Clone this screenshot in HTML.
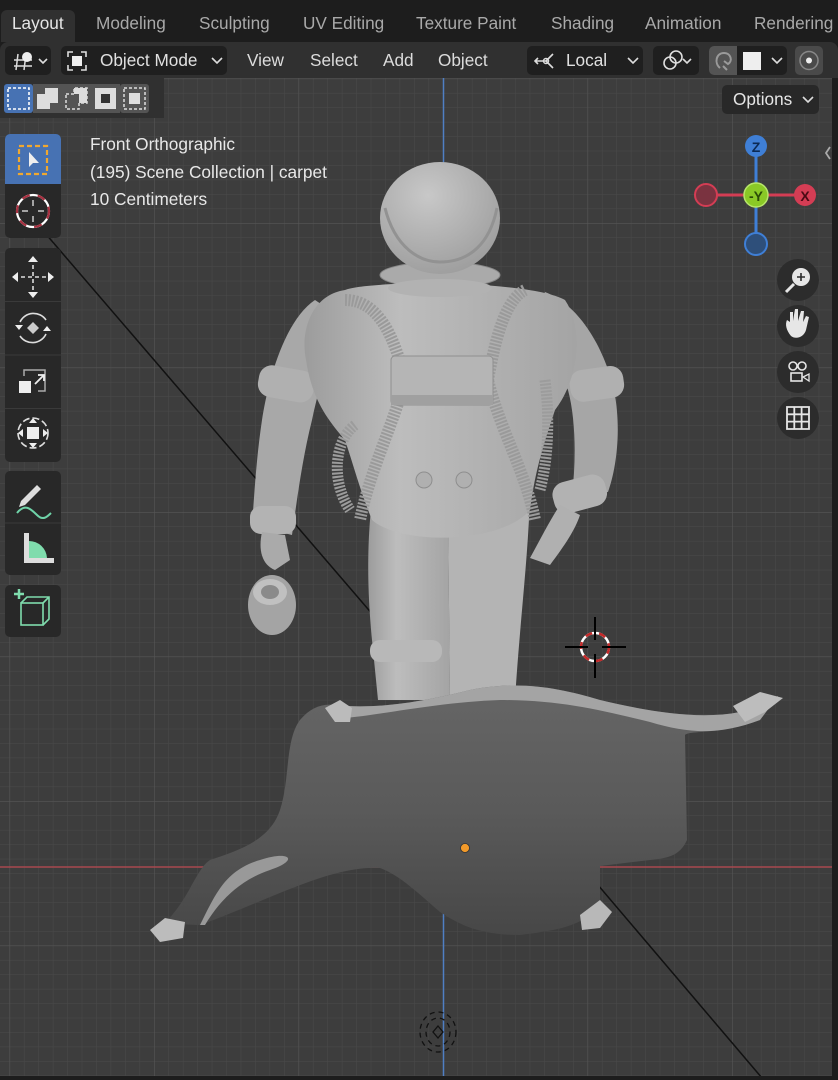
<!DOCTYPE html>
<html><head><meta charset="utf-8"><style>
*{margin:0;padding:0;box-sizing:border-box}
body{width:838px;height:1080px;background:#1d1d1d;overflow:hidden;position:relative;font-family:"Liberation Sans",sans-serif;}
.tabs{position:absolute;left:0;top:0;width:838px;height:42px;background:#1d1d1d;}
.tab{position:absolute;top:10px;height:32px;line-height:26px;font-size:17.2px;color:#a9a9a9;}
.tab.active{background:#303030;color:#e6e6e6;border-radius:6px 6px 0 0;padding:0 11px;left:1px}
.hdr{position:absolute;left:0;top:42px;width:838px;height:36px;background:#303030;border-radius:8px 8px 0 0}
.btn{position:absolute;top:4px;height:29px;background:#1f1f1f;border-radius:5px;color:#e0e0e0;font-size:17.2px;line-height:29px}
.mi{position:absolute;top:4px;height:29px;line-height:29px;color:#dcdcdc;font-size:17.2px}
.txt{position:absolute;color:#e8e8e8;font-size:17.3px;left:90px}
.tb{position:absolute;left:5px;width:56px;background:#282828;border-radius:5px}
</style></head><body>
<div class="tabs">
<div class="tab active">Layout</div>
<div class="tab" style="left:96px">Modeling</div>
<div class="tab" style="left:199px">Sculpting</div>
<div class="tab" style="left:303px">UV Editing</div>
<div class="tab" style="left:416px">Texture Paint</div>
<div class="tab" style="left:551px">Shading</div>
<div class="tab" style="left:645px">Animation</div>
<div class="tab" style="left:754px">Rendering</div>
</div>

<svg style="position:absolute;left:0;top:78px" width="838" height="1002">
<defs>
<pattern id="g" width="14.45" height="14.45" patternUnits="userSpaceOnUse" x="9.5" y="0.5">
<path d="M0 0H14.45M0 0V14.45" stroke="#4a4a4a" stroke-width="1" fill="none"/>
</pattern>
<pattern id="G" width="144.5" height="144.5" patternUnits="userSpaceOnUse" x="9.5" y="0.5">
<path d="M0 0H144.5M0 0V144.5" stroke="#565656" stroke-width="1.2" fill="none"/>
</pattern>
<linearGradient id="cg" x1="0" y1="0" x2="0" y2="1"><stop offset="0" stop-color="#666"/><stop offset="0.5" stop-color="#5a5a5a"/><stop offset="1" stop-color="#474747"/></linearGradient>
<radialGradient id="hg" cx="0.4" cy="0.3" r="0.8"><stop offset="0" stop-color="#c8c8c8"/><stop offset="1" stop-color="#9a9a9a"/></radialGradient>
<linearGradient id="bg" x1="0" y1="0" x2="1" y2="0"><stop offset="0" stop-color="#9c9c9c"/><stop offset="0.35" stop-color="#bdbdbd"/><stop offset="1" stop-color="#a4a4a4"/></linearGradient>
</defs>
<rect width="832" height="998" fill="#3d3d3d"/>
<rect width="832" height="998" fill="url(#g)"/>
<rect width="832" height="998" fill="url(#G)"/>
<rect x="0" y="0" width="164" height="40" fill="#303030"/>
<line x1="443.5" y1="0" x2="443.5" y2="998" stroke="#4f7fc4" stroke-width="1.5"/>
<line x1="0" y1="789" x2="832" y2="789" stroke="#a8484f" stroke-width="1.5"/>
<line x1="45" y1="155" x2="380" y2="545" stroke="#111" stroke-width="1.5"/>
<line x1="575" y1="780" x2="762" y2="1000" stroke="#111" stroke-width="1.5"/>

<g transform="translate(0,-78)">
<!-- left arm -->
<path d="M315 300 C285 320 268 380 262 420 C256 460 254 500 252 525 L292 535 C297 500 302 460 312 420 C320 380 335 340 345 320Z" fill="#a8a8a8"/>
<rect x="258" y="368" width="56" height="32" rx="13" fill="#b0b0b0" transform="rotate(10 287 385)"/>
<rect x="250" y="506" width="46" height="28" rx="11" fill="#b3b3b3"/>
<path d="M262 532 C258 550 262 565 275 570 L290 560 L285 535Z" fill="#aaa"/>
<ellipse cx="272" cy="605" rx="24" ry="30" fill="#a4a4a4"/>
<ellipse cx="270" cy="592" rx="17" ry="13" fill="#c0c0c0"/>
<ellipse cx="270" cy="592" rx="9" ry="7" fill="#8a8a8a"/>
<!-- right arm -->
<path d="M545 292 C580 305 605 350 614 390 C622 430 616 470 608 492 L572 497 C576 460 576 420 568 390 C558 360 543 330 533 320Z" fill="#a6a6a6"/>
<rect x="570" y="368" width="54" height="32" rx="13" fill="#b0b0b0" transform="rotate(-8 596 385)"/>
<rect x="553" y="478" width="54" height="32" rx="13" fill="#b2b2b2" transform="rotate(-15 580 495)"/>
<path d="M560 505 C550 520 540 540 530 558 L550 565 C565 545 575 530 580 515Z" fill="#b0b0b0"/>
<!-- legs -->
<path d="M372 500 L448 510 L450 700 L378 700 L372 640 C368 600 366 550 372 500Z" fill="url(#bg)"/>
<path d="M448 510 L530 495 C528 560 520 620 515 700 L450 700Z" fill="#b4b4b4"/>
<rect x="370" y="640" width="72" height="22" rx="10" fill="#b8b8b8"/>
<!-- torso -->
<path d="M345 290 C312 295 300 330 306 360 C312 400 328 420 345 440 C355 470 360 490 372 520 C400 545 500 545 530 510 C535 470 545 440 555 410 C578 380 585 330 565 300 C530 280 370 280 345 290Z" fill="url(#bg)"/>
<path d="M345 300 C380 300 395 340 405 380 C395 420 370 470 360 520" stroke="#9a9a9a" stroke-width="12" fill="none" stroke-dasharray="2 1.5"/>
<path d="M525 290 C505 300 495 340 488 380 C500 430 525 470 535 520" stroke="#9a9a9a" stroke-width="12" fill="none" stroke-dasharray="2 1.5"/>
<path d="M355 425 C335 440 330 480 350 510" stroke="#9c9c9c" stroke-width="11" fill="none" stroke-dasharray="2 1.5"/>
<path d="M545 380 C550 420 548 460 540 490" stroke="#9c9c9c" stroke-width="11" fill="none" stroke-dasharray="2 1.5"/>
<rect x="391" y="356" width="102" height="49" rx="4" fill="#b5b5b5" stroke="#909090"/>
<rect x="391" y="395" width="102" height="10" fill="#a0a0a0"/>
<circle cx="424" cy="480" r="8" fill="#b0b0b0" stroke="#8e8e8e"/>
<circle cx="464" cy="480" r="8" fill="#b0b0b0" stroke="#8e8e8e"/>
<ellipse cx="440" cy="275" rx="60" ry="13" fill="#aaa" stroke="#888"/>
<ellipse cx="440" cy="288" rx="52" ry="9" fill="#b2b2b2"/>
<ellipse cx="440" cy="218" rx="60" ry="56" fill="url(#hg)"/>
<path d="M385 208 C395 248 420 262 440 262 C470 262 490 243 497 208" stroke="#929292" stroke-width="3" fill="none"/>
<!-- carpet -->
<path d="M335 705 C380 710 430 700 470 690 C520 680 560 688 600 700 C650 712 700 720 740 712 L778 696 L760 720 C720 735 690 730 685 735 L687 840 C680 855 670 858 650 860 L600 866 L600 900 C590 925 560 930 520 935 C480 935 460 925 440 912 C420 895 400 875 380 868 C330 865 270 900 200 925 C185 925 175 922 160 928 C190 900 195 870 210 860 C240 850 270 840 280 810 C290 780 285 740 300 720 C310 708 322 703 335 705Z" fill="url(#cg)"/>
<path d="M335 705 C380 710 430 700 470 690 C520 680 560 688 600 700 C650 712 700 720 740 712 L778 696 L760 720 C720 735 690 734 650 722 C600 710 560 700 500 700 C440 702 380 715 345 718Z" fill="#a4a4a4"/>
<path d="M200 925 C215 895 225 870 260 860 C290 850 300 860 270 870 C240 880 220 900 205 925Z" fill="#999"/>
<path d="M150 930 L165 918 L185 922 L183 938 L160 942Z" fill="#bcbcbc"/>
<path d="M325 708 L340 700 L352 708 L350 722 L335 722Z" fill="#bbb"/>
<path d="M733 706 L760 692 L783 698 L765 712 L745 722Z" fill="#bdbdbd"/>
<path d="M580 915 L600 900 L612 912 L600 928 L582 930Z" fill="#b8b8b8"/>
<circle cx="465" cy="848" r="4.5" fill="#f29a2a" stroke="#333" stroke-width="0.8"/>
<circle cx="595" cy="647" r="14" fill="none" stroke="#fff" stroke-width="2.5"/>
<circle cx="595" cy="647" r="14" fill="none" stroke="#c42a2a" stroke-width="2.5" stroke-dasharray="7 7"/>
<path d="M565 647H588M602 647H626M595 617V640M595 654V678" stroke="#000" stroke-width="2"/>
<ellipse cx="438" cy="1032" rx="18" ry="20" fill="none" stroke="#111" stroke-width="1.3" stroke-dasharray="5 4"/>
<ellipse cx="438" cy="1032" rx="12" ry="14" fill="none" stroke="#111" stroke-width="1.3" stroke-dasharray="5 4"/>
<path d="M438 1026 L443 1032 L438 1038 L433 1032Z" fill="none" stroke="#111" stroke-width="1.3"/>
<line x1="756" y1="148" x2="756" y2="244" stroke="#3f7fd6" stroke-width="3"/>
<line x1="706" y1="195" x2="805" y2="195" stroke="#d43d54" stroke-width="3"/>
<circle cx="756" cy="146" r="11" fill="#3f7fd6"/>
<text x="756" y="152" font-size="14" font-weight="bold" text-anchor="middle" fill="#0c2a55" font-family="Liberation Sans">Z</text>
<circle cx="706" cy="195" r="11" fill="#7a3340" stroke="#d43d54" stroke-width="2"/>
<circle cx="756" cy="244" r="11" fill="#2e4f7a" stroke="#3f7fd6" stroke-width="2"/>
<circle cx="805" cy="195" r="11" fill="#d43d54"/>
<text x="805" y="201" font-size="14" font-weight="bold" text-anchor="middle" fill="#4a0a14" font-family="Liberation Sans">X</text>
<circle cx="756" cy="195" r="12" fill="#8ac926" stroke="#b7e66a" stroke-width="1.5"/>
<text x="756" y="201" font-size="14" font-weight="bold" text-anchor="middle" fill="#2a4a08" font-family="Liberation Sans">-Y</text>
<circle cx="798" cy="280" r="21" fill="#2c2c2c"/>
<circle cx="801" cy="277" r="9" fill="#e6e6e6"/><path d="M797 277h8M801 273v8" stroke="#2c2c2c" stroke-width="1.6"/><path d="M794 284 L786 292" stroke="#e6e6e6" stroke-width="3"/>
<circle cx="798" cy="326" r="21" fill="#2c2c2c"/>
<path d="M791 336 C786 330 785 324 787 320 L790 322 L790 312 L793 312 L793 321 L795 309 L798 309 L798 321 L801 311 L804 311 L803 322 L806 316 L809 317 L806 330 C804 337 796 340 791 336Z" fill="#e6e6e6"/>
<circle cx="798" cy="372" r="21" fill="#2c2c2c"/>
<circle cx="793" cy="366" r="4" fill="none" stroke="#e6e6e6" stroke-width="1.6"/><circle cx="802" cy="366" r="4" fill="none" stroke="#e6e6e6" stroke-width="1.6"/>
<rect x="791" y="373" width="11" height="8" fill="none" stroke="#e6e6e6" stroke-width="1.6"/><path d="M803 377 L809 374 V381Z" fill="none" stroke="#e6e6e6" stroke-width="1.3"/>
<circle cx="798" cy="418" r="21" fill="#2c2c2c"/>
<path d="M787 407h22v22h-22zM787 414.3h22M787 421.6h22M794.3 407v22M801.6 407v22" stroke="#e6e6e6" stroke-width="1.8" fill="none"/>
<path d="M830 147 L826 153 L830 159" stroke="#aaa" stroke-width="1.8" fill="none"/>
</g>
<rect x="832" y="0" width="6" height="1002" fill="#1d1d1d"/>
<rect x="0" y="998" width="838" height="4" fill="#1d1d1d"/>
</svg>

<div class="hdr">
<div class="btn" style="left:5px;width:46px"><svg width="46" height="29"><path d="M9 20h18M9 14h18M13 8l-2 16M21 8l-2 16" stroke="#ddd" stroke-width="1.5"/><circle cx="22" cy="11" r="5" fill="#eee"/><path d="M34 13l4 4 4-4" stroke="#ddd" stroke-width="1.6" fill="none"/></svg></div>
<div class="btn" style="left:61px;width:166px"><svg style="position:absolute;left:6px;top:5px" width="20" height="20"><path d="M1 6V1h5M14 1h5v5M19 14v5h-5M6 19H1v-5" stroke="#ddd" stroke-width="1.6" fill="none"/><rect x="5" y="5" width="10" height="10" fill="#eee"/></svg><span style="position:absolute;left:39px">Object Mode</span><svg style="position:absolute;left:150px;top:11px" width="12" height="8"><path d="M1 1l5 5 5-5" stroke="#ddd" stroke-width="1.6" fill="none"/></svg></div>
<div class="mi" style="left:247px">View</div>
<div class="mi" style="left:310px">Select</div>
<div class="mi" style="left:383px">Add</div>
<div class="mi" style="left:438px">Object</div>
<div class="btn" style="left:527px;width:116px"><svg style="position:absolute;left:6px;top:5px" width="24" height="20"><path d="M2 10h11M5 7l-3 3 3 3M13 10l7-7M13 10l7 7" stroke="#ddd" stroke-width="1.6" fill="none"/><circle cx="13" cy="10" r="2.5" fill="none" stroke="#ddd" stroke-width="1.5"/></svg><span style="position:absolute;left:39px">Local</span><svg style="position:absolute;left:100px;top:11px" width="12" height="8"><path d="M1 1l5 5 5-5" stroke="#ddd" stroke-width="1.6" fill="none"/></svg></div>
<div class="btn" style="left:653px;width:46px"><svg width="46" height="29"><circle cx="17" cy="17" r="6" fill="none" stroke="#ddd" stroke-width="1.6"/><circle cx="23" cy="11" r="6" fill="none" stroke="#ddd" stroke-width="1.6"/><path d="M30 13l4 4 4-4" stroke="#ddd" stroke-width="1.6" fill="none"/></svg></div>
<div class="btn" style="left:709px;width:78px;background:#1f1f1f"><div style="position:absolute;left:0;top:0;width:28px;height:29px;background:#545454;border-radius:5px 0 0 5px"></div><svg style="position:absolute;left:3px;top:3px" width="24" height="24"><path d="M8 19 C2 14 4 4 12 4 C19 4 21 12 16 15 L12 12 M11 17 L15 21" stroke="#9a9a9a" stroke-width="2" fill="none"/></svg><div style="position:absolute;left:34px;top:6px;width:18px;height:18px;background:#eee"></div><svg style="position:absolute;left:62px;top:11px" width="12" height="8"><path d="M1 1l5 5 5-5" stroke="#ddd" stroke-width="1.6" fill="none"/></svg></div>
<div class="btn" style="left:795px;width:28px;background:#4a4a4a"><svg width="28" height="29"><circle cx="14" cy="14.5" r="9" fill="none" stroke="#888" stroke-width="1.5"/><circle cx="14" cy="14.5" r="3" fill="#eee"/></svg></div>
</div>

<div style="position:absolute;left:0;top:78px;width:164px;height:40px;background:#303030"></div>
<svg style="position:absolute;left:4px;top:84px" width="148" height="29">
<rect x="0" y="0" width="29" height="29" rx="3" fill="#4772b3"/><rect x="4" y="4" width="21" height="21" fill="none" stroke="#fff" stroke-width="1.6" stroke-dasharray="3 2"/>
<rect x="29" y="0" width="29" height="29" fill="#545454"/><path d="M33 10h8v-6h13v15h-8v6h-13z" fill="#ddd"/>
<rect x="58" y="0" width="29" height="29" fill="#545454"/><path d="M62 10h8v-6h13v15h-8v6h-13z" fill="none" stroke="#ddd" stroke-width="1.5" stroke-dasharray="3 2"/><path d="M70 4h13v15h-8v-9h-5z" fill="#ddd"/>
<rect x="87" y="0" width="29" height="29" fill="#545454"/><rect x="91" y="4" width="21" height="21" fill="#ddd"/><rect x="97" y="10" width="9" height="9" fill="#333"/>
<rect x="116" y="0" width="29" height="29" rx="3" fill="#545454"/><rect x="120" y="4" width="21" height="21" fill="none" stroke="#ddd" stroke-width="1.5" stroke-dasharray="3 2"/><rect x="125" y="9" width="11" height="11" fill="#ddd"/>
</svg>
<div style="position:absolute;left:722px;top:85px;width:97px;height:29px;background:#282828;border-radius:5px;color:#e6e6e6;font-size:17.2px;line-height:29px;padding-left:11px">Options<svg style="position:absolute;left:80px;top:11px" width="12" height="8"><path d="M1 1l5 5 5-5" stroke="#ddd" stroke-width="1.6" fill="none"/></svg></div>

<div class="txt" style="top:134px">Front Orthographic</div>
<div class="txt" style="top:162px">(195) Scene Collection | carpet</div>
<div class="txt" style="top:189px">10 Centimeters</div>

<div class="tb" style="top:134px;height:104px"></div>
<div style="position:absolute;left:5px;top:134px;width:56px;height:50px;background:#4772b3;border-radius:5px 5px 0 0"></div>
<svg style="position:absolute;left:5px;top:134px" width="56" height="104">
<rect x="14" y="12" width="28" height="28" fill="none" stroke="#f0a830" stroke-width="2.2" stroke-dasharray="5 3"/><path d="M24 18v15l4-4 6 0z" fill="#eee"/>
<circle cx="28" cy="77" r="16" fill="none" stroke="#fff" stroke-width="2.2"/><circle cx="28" cy="77" r="16" fill="none" stroke="#a83040" stroke-width="2.2" stroke-dasharray="8 8"/>
<path d="M28 66v6M28 82v6M17 77h6M33 77h6" stroke="#ccc" stroke-width="1.5"/>
</svg>
<div class="tb" style="top:248px;height:214px"></div>
<svg style="position:absolute;left:5px;top:248px" width="56" height="214">
<path d="M0 53.5h56M0 107h56M0 160.5h56" stroke="#3a3a3a" stroke-width="1"/>
<path d="M28 10v38M9 29h38" stroke="#ddd" stroke-width="1.6" stroke-dasharray="4 3"/><path d="M28 8l-5 6h10zM28 50l-5-6h10zM7 29l6-5v10zM49 29l-6-5v10z" fill="#eee"/>
<path d="M15 74 A15 15 0 0 1 41 72M41 86 A15 15 0 0 1 15 88" stroke="#ddd" stroke-width="1.6" fill="none"/><path d="M28 74l6 6-6 6-6-6z" fill="#ccc"/><path d="M10 77h8l-4 5zM46 83h-8l4-5z" fill="#eee"/>
<rect x="14" y="133" width="12" height="12" fill="#eee"/><path d="M19 128V122h21v21h-7" stroke="#aaa" stroke-width="1.5" fill="none"/><path d="M30 136l8-8M33 127h6v6" stroke="#eee" stroke-width="1.8" fill="none"/>
<circle cx="28" cy="185" r="15" fill="none" stroke="#ddd" stroke-width="1.6" stroke-dasharray="7 3"/><rect x="22" y="179" width="12" height="12" fill="#eee"/><path d="M28 170l-4 5h8zM28 200l-4-5h8zM13 185l5-4v8zM43 185l-5-4v8z" fill="#eee"/>
</svg>
<div class="tb" style="top:471px;height:104px"></div>
<svg style="position:absolute;left:5px;top:471px" width="56" height="104">
<path d="M0 52h56" stroke="#3a3a3a" stroke-width="1"/>
<path d="M14 36l2-6 16-16 4 4-16 16z" fill="#ddd"/><path d="M12 42c8-10 14-4 20 2s10 2 14-2" stroke="#6fd3a8" stroke-width="2" fill="none"/>
<path d="M19 62v30h30v-5H24V62z" fill="#ddd"/><path d="M24 87 V70 A18 18 0 0 1 42 87z" fill="#7fdcad"/>
</svg>
<div class="tb" style="top:585px;height:52px"></div>
<svg style="position:absolute;left:5px;top:585px" width="56" height="52">
<rect x="16" y="18" width="22" height="22" fill="none" stroke="#7fdcad" stroke-width="1.6"/><path d="M16 18l6-6h22v22l-6 6M38 18l6-6" stroke="#7fdcad" stroke-width="1.6" fill="none"/><path d="M14 4v10M9 9h10" stroke="#7fdcad" stroke-width="2.5"/>
</svg>
</body></html>
